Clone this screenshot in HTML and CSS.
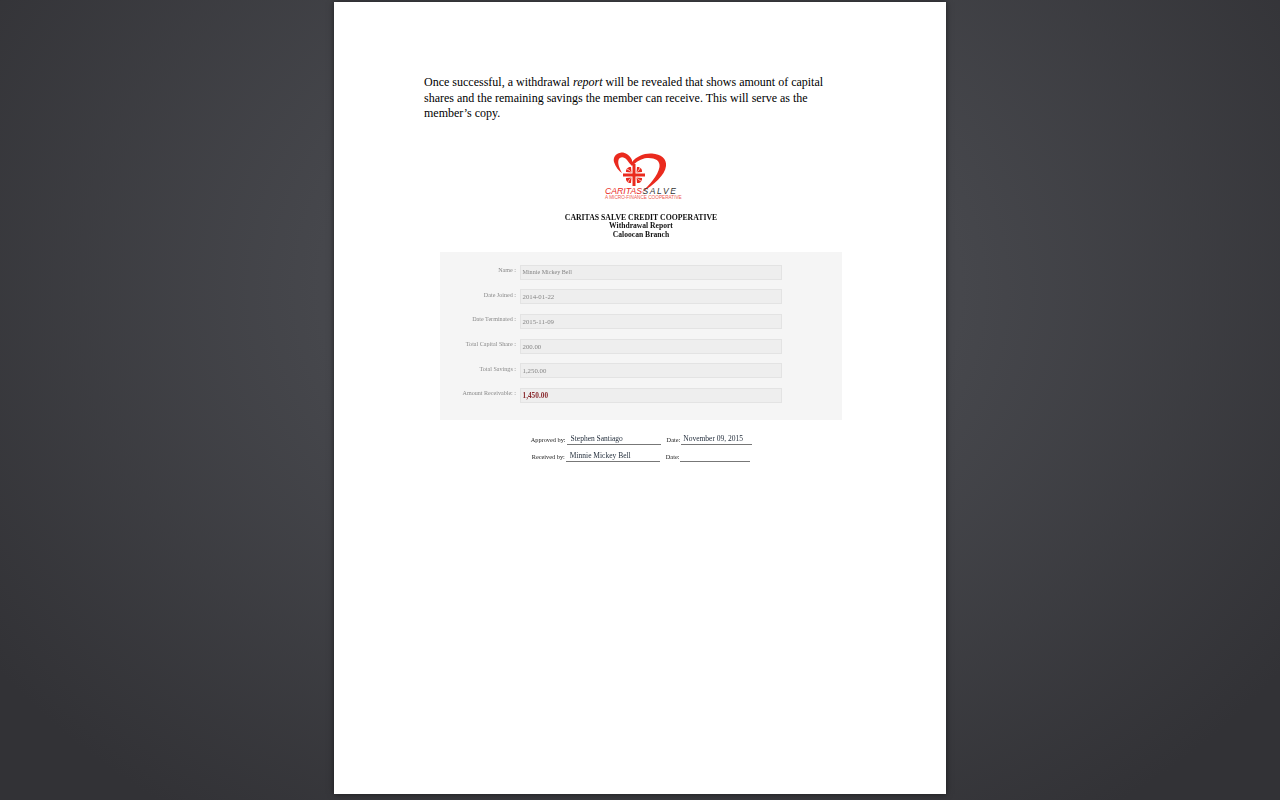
FILE: index.html
```html
<!DOCTYPE html>
<html lang="en">
<head>
<meta charset="utf-8">
<title>Withdrawal Report</title>
<link rel="stylesheet" href="styles.css">
</head>
<body>
<main class="page">
  <p class="intro">Once successful, a withdrawal <em>report</em> will be revealed that shows amount of capital shares and the remaining savings the member can receive. This will serve as the member’s copy.</p>
  <div class="shot">
    <svg class="logo" width="90" height="52" viewBox="0 0 90 52" aria-label="Caritas Salve logo">
      <path d="M36 12 C33 6 28 4 24.500 4.700 C19 5.500 17 10 18 14 C19.500 19 23 23 26 25 C23.500 20 21.500 16 22.500 12 C23.500 8.500 28 8 31 12 C33 15 35 17 36 18 Z" fill="#ea2a1e"/>
      <path d="M36 14 C41 8 48 5 56 5.500 C65 6 71 11 70 18 C69 27 58 37 46 44 C53 37 62 28 63.500 19 C64.500 12 58 9.500 51 10 C45 10.500 40 14 36 18 Z" fill="#ea2a1e"/>
      <g fill="#ea2a1e" transform="translate(38 27)">
        <rect x="-1.500" y="-11" width="3" height="22"/>
        <rect x="-11" y="-1.500" width="22" height="3"/>
        <g id="flame">
          <path d="M2.500 -2.500 L3 -8 C6 -8.500 8.500 -6 8 -3 Z"/>
          <path d="M3.500 -3.500 C4.500 -4.500 5.500 -5.500 6 -7.500" fill="none" stroke="#fff" stroke-width="0.700"/>
        </g>
        <use href="#flame" transform="rotate(90)"/>
        <use href="#flame" transform="rotate(180)"/>
        <use href="#flame" transform="rotate(270)"/>
      </g>
      <text class="logo-red" x="9" y="46">CARITAS</text>
      <text class="logo-dark" x="46.500" y="46">SALVE</text>
      <text class="logo-tag" x="9" y="50.500">A MICRO-FINANCE COOPERATIVE</text>
    </svg>
    <div class="heading">
      <div class="heading-main">CARITAS SALVE CREDIT COOPERATIVE</div>
      <div>Withdrawal Report</div>
      <div>Caloocan Branch</div>
    </div>
    <form class="panel">
      <div class="row"><span class="label">Name :</span><span class="field">Minnie Mickey Bell</span></div>
      <div class="row"><span class="label">Date Joined :</span><span class="field num">2014-01-22</span></div>
      <div class="row"><span class="label">Date Terminated :</span><span class="field num">2015-11-09</span></div>
      <div class="row"><span class="label">Total Capital Share :</span><span class="field num">200.00</span></div>
      <div class="row"><span class="label">Total Savings :</span><span class="field num">1,250.00</span></div>
      <div class="row"><span class="label">Amount Receivable: :</span><span class="field num total">1,450.00</span></div>
    </form>
    <div class="signs">
      <div class="sign-row sign-row-approved">
        <span class="sign-label">Approved by:</span><span class="line line-name">Stephen Santiago</span>
        <span class="sign-label date-label">Date:</span><span class="line line-date line-date-wide">November 09, 2015</span>
      </div>
      <div class="sign-row sign-row-received">
        <span class="sign-label">Received by:</span><span class="line line-name">Minnie Mickey Bell</span>
        <span class="sign-label date-label">Date:</span><span class="line line-date"></span>
      </div>
    </div>
  </div>
</main>
</body>
</html>
```
FILE: styles.css
```css
* { box-sizing: border-box; }
html, body { height: 100%; }
body {
  margin: 0;
  height: 800px;
  overflow: hidden;
  background: radial-gradient(ellipse 800px 640px at 640px 290px, #4b4c51 0%, #46474c 40%, #323236 100%);
  font-family: "Liberation Serif", "Times New Roman", serif;
  display: flex;
  justify-content: center;
  align-items: flex-start;
}
.page {
  width: 612px;
  height: 792px;
  margin-top: 2px;
  background: #fff;
  box-shadow: 0 0 6px rgba(0, 0, 0, 0.55);
  padding: 72px 0 0 90px;
}
.intro {
  margin: 0;
  padding-top: 1px;
  width: 405px;
  font-size: 12px;
  line-height: 15.500px;
  color: #000;
}
.intro em { font-style: italic; }
.shot {
  width: 402px;
  margin: 26px 0 0 16px;
  display: flex;
  flex-direction: column;
  align-items: center;
}
.logo { display: block; }
.logo-red { font: italic 8.700px "Liberation Sans", sans-serif; fill: #ea2a1e; }
.logo-dark { font: italic 8.500px "Liberation Sans", sans-serif; letter-spacing: 1.600px; fill: #333; }
.logo-tag { font: 4.700px "Liberation Sans", sans-serif; fill: #ee5a50; }
.heading {
  margin-top: 14px;
  text-align: center;
  font-size: 7.600px;
  font-weight: bold;
  line-height: 8.800px;
  color: #111;
  filter: blur(0.2px);
}
.heading-main { font-size: 7.750px; }
.panel {
  width: 402px;
  height: 168px;
  margin-top: 12px;
  background: #f5f5f5;
  padding: 13px 60px 0 0;
  display: flex;
  flex-direction: column;
  gap: 9.700px;
}
.row {
  display: flex;
  align-items: center;
  height: 14.900px;
  font-size: 6.100px;
  color: #8a8a8a;
  filter: blur(0.2px);
}
.label {
  width: 76px;
  margin-right: 4px;
  text-align: right;
  position: relative;
  top: -2px;
  white-space: nowrap;
  flex: none;
}
.field {
  flex: 1;
  height: 100%;
  background: #eee;
  border: 1px solid #e3e3e3;
  padding: 0 2px 0 1.500px;
  display: flex;
  align-items: center;
  color: #858585;
}
.num { font-size: 6.800px; }
.total { color: #8b2b2f; font-weight: bold; font-size: 7.300px; }
.signs {
  margin-top: 14px;
  display: flex;
  flex-direction: column;
  gap: 6px;
  font-size: 6.300px;
  color: #222;
  filter: blur(0.15px);
}
.sign-row {
  display: flex;
  align-items: flex-end;
  height: 11px;
}
.sign-row-approved { padding-left: 1px; }
.sign-row-received { padding-left: 2px; }
.sign-label { white-space: nowrap; line-height: 9px; position: relative; top: -1px; }
.date-label { margin-left: 6px; }
.line {
  display: block;
  border-bottom: 1px solid #777;
  height: 11px;
  line-height: 9.500px;
  font-size: 7.500px;
  color: #1f2a38;
  white-space: nowrap;
}
.line-name { width: 94px; margin-left: 1px; padding-left: 4px; }
.line-date { width: 70px; margin-left: 1px; padding-left: 2px; }
.line-date-wide { width: 71px; }
```
